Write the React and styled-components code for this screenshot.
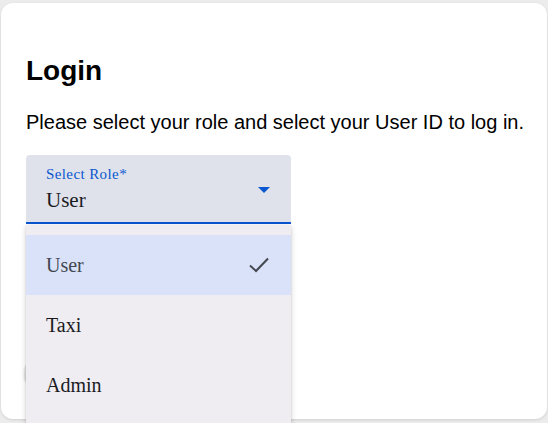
import React from 'react';
import styled, { createGlobalStyle } from 'styled-components';

const GlobalStyle = createGlobalStyle`
  html, body {
    margin: 0;
    padding: 0;
    background: #ececec;
    overflow: hidden;
  }
`;

const Page = styled.div`
  padding: 3px 1px 4px 1px;
  height: 423px;
  box-sizing: border-box;
`;

const Card = styled.div`
  position: relative;
  height: 416px;
  box-sizing: border-box;
  background: #ffffff;
  border-radius: 12px;
  box-shadow: 0 1px 3px rgba(0, 0, 0, 0.12);
  padding: 52px 25px 0;
`;

const Title = styled.h1`
  margin: 0;
  font-family: "Liberation Sans", Arial, sans-serif;
  font-size: 28px;
  line-height: 32px;
  font-weight: 700;
  color: #000;
`;

const Intro = styled.p`
  margin: 24px 0 0;
  font-family: "Liberation Sans", Arial, sans-serif;
  font-size: 20px;
  line-height: 22px;
  white-space: nowrap;
  color: #000;
`;

const SelectWrap = styled.div`
  position: relative;
  width: 265px;
  margin-top: 22px;
`;

const Field = styled.div`
  display: flex;
  align-items: center;
  justify-content: space-between;
  background: #dfe2eb;
  border-radius: 4px 4px 0 0;
  border-bottom: 2px solid #0b57d0;
  padding: 10px 21px 10px 20px;
`;

const FieldText = styled.div`
  display: flex;
  flex-direction: column;
  gap: 5px;
  font-family: "Liberation Serif", "Times New Roman", serif;
`;

const Label = styled.span`
  font-size: 15px;
  line-height: 18px;
  letter-spacing: 0.4px;
  color: #0b57d0;
`;

const Value = styled.span`
  font-size: 21px;
  line-height: 24px;
  color: #1b1b1f;
`;

const Arrow = styled.svg`
  margin-top: 3px;
  display: block;
`;

const Menu = styled.ul`
  position: absolute;
  top: calc(100% + 1px);
  left: 0;
  right: 0;
  margin: 0;
  padding: 10px 0 8px;
  list-style: none;
  background: #efedf1;
  box-shadow: 0 2px 6px rgba(0, 0, 0, 0.18), 0 1px 2px rgba(0, 0, 0, 0.1);
  z-index: 2;
`;

const Option = styled.li`
  height: 60px;
  display: flex;
  align-items: center;
  justify-content: space-between;
  padding: 0 20px;
  font-family: "Liberation Serif", "Times New Roman", serif;
  font-size: 20px;
  color: ${(p) => (p.$selected ? '#434752' : '#1b1b1f')};
  background: ${(p) => (p.$selected ? '#d9e2f9' : 'transparent')};
`;

const Submit = styled.button`
  display: block;
  margin: 138px 0 0 -1px;
  width: 120px;
  height: 22px;
  border: none;
  border-radius: 8px;
  background: #e0e0e0;
  box-shadow: 0 1px 3px rgba(0, 0, 0, 0.3);
  font-family: "Liberation Sans", Arial, sans-serif;
`;

const CheckIcon = () => (
  <svg width="24" height="24" viewBox="0 0 24 24">
    <polyline
      points="3,12.5 9,18 21,5.5"
      fill="none"
      stroke="#44474f"
      strokeWidth="2"
    />
  </svg>
);

const roles = ['User', 'Taxi', 'Admin'];

const App = () => {
  const selected = 'User';

  return (
    <Page>
      <GlobalStyle />
      <Card>
        <Title>Login</Title>
        <Intro>Please select your role and select your User ID to log in.</Intro>
        <SelectWrap>
          <Field>
            <FieldText>
              <Label>Select Role*</Label>
              <Value>{selected}</Value>
            </FieldText>
            <Arrow width="12" height="6" viewBox="0 0 12 6">
              <path d="M0 0h12L6 6z" fill="#0b57d0" />
            </Arrow>
          </Field>
          <Menu>
            {roles.map((role) => (
              <Option key={role} $selected={role === selected}>
                {role}
                {role === selected && <CheckIcon />}
              </Option>
            ))}
          </Menu>
        </SelectWrap>
        <Submit />
      </Card>
    </Page>
  );
};

export default App;
